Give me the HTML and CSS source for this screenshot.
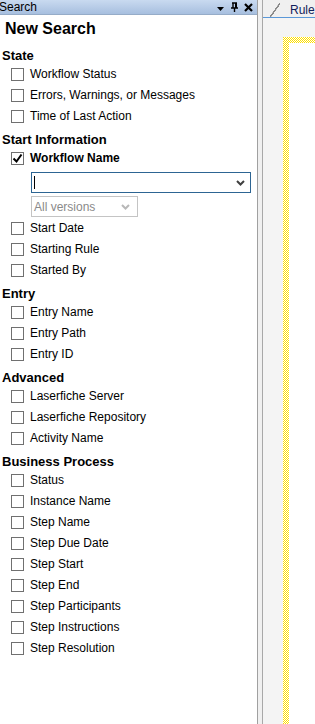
FILE: index.html
```html
<!DOCTYPE html>
<html lang="en">
<head>
    <meta charset="UTF-8">
    <meta name="viewport" content="width=device-width, initial-scale=1.0">
    <title>Search</title>
    <link rel="stylesheet" href="styles.css">
</head>
<body>
    <div class="pane">
        <div class="pane-title">
            <span class="pane-name">Search</span>
            <span class="pane-tools">
                <svg class="tool" width="9" height="9" viewBox="0 0 9 9"><path d="M1 4h7L4.5 8z" fill="#000"/></svg>
                <svg class="tool" width="9" height="10" viewBox="0 0 9 10"><path d="M2 1h5M3 1v5M6 1v5M1 6h7M4.5 6v4" stroke="#000" stroke-width="1.4" fill="none"/><rect x="5" y="1" width="2" height="5" fill="#000"/></svg>
                <svg class="tool" width="9" height="9" viewBox="0 0 9 9"><path d="M1 1l7 7M8 1L1 8" stroke="#000" stroke-width="2.2"/></svg>
            </span>
        </div>
        <div class="pane-body">
            <h1>New Search</h1>

            <div class="group">State</div>
            <label class="row"><span class="box"></span>Workflow Status</label>
            <label class="row"><span class="box"></span>Errors, Warnings, or Messages</label>
            <label class="row"><span class="box"></span>Time of Last Action</label>

            <div class="group">Start Information</div>
            <label class="row checked"><span class="box"><svg width="11" height="11" viewBox="0 0 11 11"><path d="M1.5 5.5l3 3 5-7" stroke="#000" stroke-width="2" fill="none"/></svg></span>Workflow Name</label>
            <div class="field">
                <div class="combo name-combo">
                    <span class="caret"></span>
                    <svg class="arrow" width="9" height="6" viewBox="0 0 9 6"><path d="M1 1l3.5 3.5L8 1" stroke="#404040" stroke-width="2" fill="none"/></svg>
                </div>
                <div class="combo version-combo">
                    <span>All versions</span>
                    <svg class="arrow" width="9" height="6" viewBox="0 0 9 6"><path d="M1 1l3.5 3.5L8 1" stroke="#b8b8b8" stroke-width="2" fill="none"/></svg>
                </div>
            </div>
            <label class="row"><span class="box"></span>Start Date</label>
            <label class="row"><span class="box"></span>Starting Rule</label>
            <label class="row"><span class="box"></span>Started By</label>

            <div class="group">Entry</div>
            <label class="row"><span class="box"></span>Entry Name</label>
            <label class="row"><span class="box"></span>Entry Path</label>
            <label class="row"><span class="box"></span>Entry ID</label>

            <div class="group">Advanced</div>
            <label class="row"><span class="box"></span>Laserfiche Server</label>
            <label class="row"><span class="box"></span>Laserfiche Repository</label>
            <label class="row"><span class="box"></span>Activity Name</label>

            <div class="group">Business Process</div>
            <label class="row"><span class="box"></span>Status</label>
            <label class="row"><span class="box"></span>Instance Name</label>
            <label class="row"><span class="box"></span>Step Name</label>
            <label class="row"><span class="box"></span>Step Due Date</label>
            <label class="row"><span class="box"></span>Step Start</label>
            <label class="row"><span class="box"></span>Step End</label>
            <label class="row"><span class="box"></span>Step Participants</label>
            <label class="row"><span class="box"></span>Step Instructions</label>
            <label class="row"><span class="box"></span>Step Resolution</label>
        </div>
    </div>
    <div class="splitter"></div>
    <div class="doc">
        <div class="tabs">
            <div class="tab"><span class="tab-name">Rule</span><span class="tab-mark"></span></div>
        </div>
        <div class="canvas">
            <svg class="sheet" width="32" height="687" shape-rendering="crispEdges">
                <defs>
                    <pattern id="checker" width="2" height="2" patternUnits="userSpaceOnUse">
                        <rect width="2" height="2" fill="#fff"/>
                        <rect width="1" height="1" fill="#ffe000"/>
                        <rect x="1" y="1" width="1" height="1" fill="#ffe000"/>
                    </pattern>
                </defs>
                <rect width="32" height="687" fill="url(#checker)"/>
                <rect x="6" y="6" width="26" height="681" fill="#fff"/>
            </svg>
        </div>
    </div>
</body>
</html>
```

FILE: styles.css
```css
body {
    margin: 0;
    padding: 0;
    display: flex;
    height: 724px;
    overflow: hidden;
    font-family: "Liberation Sans", Arial, sans-serif;
    font-size: 12px;
    color: #000;
    background-color: #fff;
}
.pane {
    width: 257px;
    flex: none;
    border-right: 1px solid #a0a0a0;
    background-color: #fff;
}
.pane-title {
    height: 15px;
    display: flex;
    align-items: center;
    justify-content: space-between;
    background: linear-gradient(#c9daf0, #a7bfdf);
    border-bottom: 1px solid #96acc8;
    box-sizing: border-box;
}
.pane-name {
    margin-left: -1px;
    font-size: 12px;
    line-height: 15px;
}
.pane-tools {
    display: flex;
    align-items: center;
    gap: 5px;
    margin-right: 4px;
}
.tool {
    display: block;
}
h1 {
    margin: 0;
    padding-left: 5px;
    height: 28px;
    line-height: 28px;
    font-size: 16px;
    font-weight: bold;
}
.group {
    height: 21px;
    box-sizing: border-box;
    padding: 4px 0 0 2px;
    line-height: 17px;
    font-size: 13px;
    font-weight: bold;
}
.row {
    display: flex;
    align-items: center;
    height: 21px;
    padding-left: 11px;
    line-height: 21px;
}
.box {
    width: 13px;
    height: 13px;
    box-sizing: border-box;
    border: 1px solid #707070;
    background-color: #fff;
    margin-right: 6px;
    display: flex;
    align-items: center;
    justify-content: center;
}
.checked {
    font-weight: bold;
}
.field {
    padding: 3px 0 1px 31px;
}
.combo {
    height: 21px;
    box-sizing: border-box;
    display: flex;
    align-items: center;
    justify-content: space-between;
    background-color: #fff;
}
.name-combo {
    width: 220px;
    border: 1px solid #2d6593;
    padding: 0 5px 0 2px;
}
.caret {
    width: 1px;
    height: 13px;
    background-color: #000;
}
.version-combo {
    width: 107px;
    margin-top: 3px;
    border: 1px solid #c4c4c4;
    padding: 0 7px 0 2px;
    color: #8a8a8a;
}
.splitter {
    width: 4px;
    flex: none;
    background-color: #f0f0f0;
    border-right: 1px solid #a8a8a8;
}
.doc {
    flex: 1;
    background-color: #f4f4f4;
}
.tabs {
    height: 18px;
    box-sizing: border-box;
    border-bottom: 1px solid #5a98d8;
    background-color: #f0f0f0;
    padding-left: 7px;
    padding-top: 3px;
}
.tab {
    height: 14px;
    display: flex;
    align-items: center;
    padding-left: 20px;
    background: linear-gradient(to bottom right, transparent 46%, #8a8a8a 47%, #8a8a8a 55%, transparent 56%) left / 10px 14px no-repeat;
}
.tab-name {
    font-size: 12px;
    color: #10205a;
    line-height: 14px;
}
.tab-mark {
    width: 3px;
    height: 10px;
    margin-left: 2px;
    background-color: #f2c230;
}
.canvas {
    padding: 19px 0 0 20px;
}
.sheet {
    display: block;
}
```
